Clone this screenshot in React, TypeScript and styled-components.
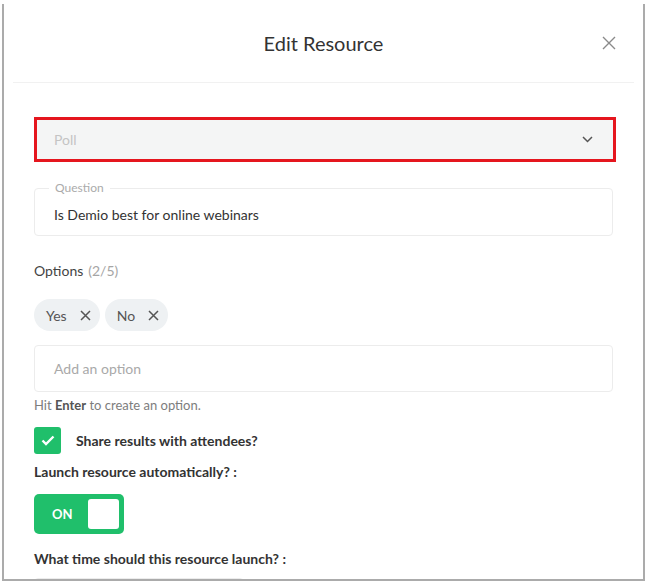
import React from "react";
import styled, { createGlobalStyle } from "styled-components";

const GlobalStyle = createGlobalStyle`
  html, body { margin: 0; padding: 0; background: #ffffff; }
  body { font-family: Lato, "Open Sans", Arial, sans-serif; color: #333; }
  * { box-sizing: border-box; }
`;

const Modal = styled.div`
  margin: 4px 0 0 2px;
  width: 643px;
  height: 577px;
  border: 2px solid #ababab;
  border-top: none;
  background: #fff;
  overflow: hidden;
`;

const Header = styled.div`
  position: relative;
  height: 79px;
  margin: 0 9px;
  border-bottom: 1px solid #f1f1f1;
  display: flex;
  align-items: center;
  justify-content: center;
`;

const Title = styled.h2`
  margin: 0;
  font-size: 20px;
  font-weight: 400;
  color: #333;
  line-height: 24px;
`;

const CloseButton = styled.button`
  position: absolute;
  right: 18px;
  top: 32px;
  width: 14px;
  height: 14px;
  padding: 0;
  border: none;
  background: transparent;
  display: flex;
  cursor: pointer;
`;

const Body = styled.div`
  padding: 34px 30px 0 30px;
  display: flex;
  flex-direction: column;
`;

const SelectBox = styled.div`
  flex-shrink: 0;
  width: calc(100% + 3px);
  height: 45px;
  border: 3px solid #e5161e;
  background: #f4f5f5;
  display: flex;
  align-items: center;
  justify-content: space-between;
  padding: 0 20px 0 17px;
  font-size: 14px;
  color: #c4c4c4;
`;

const Fieldset = styled.fieldset`
  flex-shrink: 0;
  margin: 19px 0 0 0;
  padding: 0 19px 0 19px;
  height: 55px;
  border: 1px solid #ececec;
  border-radius: 4px;
`;

const Legend = styled.legend`
  font-size: 12px;
  color: #ababab;
  padding: 0 6px;
  margin-left: -5px;
  line-height: 14px;
`;

const FieldText = styled.div`
  font-size: 14px;
  color: #333;
  line-height: 18px;
  margin-top: 11px;
`;

const SectionLabel = styled.div<{ $mt: number; $bold?: boolean }>`
  margin-top: ${(p) => p.$mt}px;
  font-size: 14px;
  line-height: 20px;
  color: ${(p) => (p.$bold ? "#333" : "#444")};
  font-weight: ${(p) => (p.$bold ? 700 : 400)};
`;

const Muted = styled.span`
  color: #a5a5a5;
  margin-left: 5px;
`;

const ChipRow = styled.div`
  margin-top: 18px;
  display: flex;
  gap: 5px;
`;

const Chip = styled.div`
  height: 32px;
  border-radius: 16px;
  background: #eef1f3;
  display: flex;
  align-items: center;
  gap: 13px;
  padding: 0 9px 0 12px;
  font-size: 14px;
  color: #555;
`;

const ChipX = styled.span`
  display: flex;
`;

const InputBox = styled.div`
  flex-shrink: 0;
  margin-top: 14px;
  height: 47px;
  border: 1px solid #ececec;
  border-radius: 4px;
  display: flex;
  align-items: center;
  padding: 0 19px;
  font-size: 14px;
  color: #a9a9a9;
`;

const Hint = styled.div`
  margin-top: 5px;
  font-size: 13px;
  line-height: 16px;
  color: #7d7d7d;
  b { color: #555; font-weight: 700; }
`;

const CheckRow = styled.label`
  margin-top: 14px;
  display: flex;
  align-items: center;
  gap: 15px;
  font-size: 14px;
  font-weight: 700;
  color: #333;
`;

const CheckBox = styled.span`
  width: 27px;
  height: 27px;
  border-radius: 3px;
  background: #20bf6b;
  display: flex;
  align-items: center;
  justify-content: center;
`;

const Toggle = styled.div`
  flex-shrink: 0;
  margin-top: 12px;
  width: 90px;
  height: 40px;
  border-radius: 5px;
  background: #20bf6b;
  display: flex;
  align-items: center;
  justify-content: space-between;
  padding: 0 5px 0 18px;
`;

const ToggleText = styled.span`
  color: #fff;
  font-weight: 700;
  font-size: 13px;
`;

const Knob = styled.span`
  width: 31px;
  height: 30px;
  border-radius: 3px;
  background: #fff;
`;

const NextInput = styled.div`
  flex-shrink: 0;
  margin-top: 9px;
  height: 40px;
  border: 1px solid #ececec;
  border-radius: 4px;
  width: 210px;
`;

export default function App() {
  return (
    <>
      <GlobalStyle />
      <Modal>
        <Header>
          <Title>Edit Resource</Title>
          <CloseButton aria-label="Close">
            <svg width="14" height="14" viewBox="0 0 14 14">
              <path d="M1 1L13 13M13 1L1 13" stroke="#8a8a8a" strokeWidth="1.4" fill="none" />
            </svg>
          </CloseButton>
        </Header>
        <Body>
          <SelectBox>
            <span>Poll</span>
            <svg width="11" height="7" viewBox="0 0 11 7">
              <path d="M1 1L5.5 5.5L10 1" stroke="#555" strokeWidth="1.5" fill="none" />
            </svg>
          </SelectBox>
          <Fieldset>
            <Legend>Question</Legend>
            <FieldText>Is Demio best for online webinars</FieldText>
          </Fieldset>
          <SectionLabel $mt={25}>
            Options<Muted>(2/5)</Muted>
          </SectionLabel>
          <ChipRow>
            {["Yes", "No"].map((o) => (
              <Chip key={o}>
                {o}
                <ChipX>
                  <svg width="11" height="11" viewBox="0 0 11 11">
                    <path d="M1 1L10 10M10 1L1 10" stroke="#555" strokeWidth="1.5" fill="none" />
                  </svg>
                </ChipX>
              </Chip>
            ))}
          </ChipRow>
          <InputBox>Add an option</InputBox>
          <Hint>
            Hit <b>Enter</b> to create an option.
          </Hint>
          <CheckRow>
            <CheckBox>
              <svg width="14" height="11" viewBox="0 0 14 11">
                <path d="M1.5 5.5L5 9L12.5 1.5" stroke="#fff" strokeWidth="2.4" fill="none" />
              </svg>
            </CheckBox>
            Share results with attendees?
          </CheckRow>
          <SectionLabel $mt={8} $bold>
            Launch resource automatically? :
          </SectionLabel>
          <Toggle>
            <ToggleText>ON</ToggleText>
            <Knob />
          </Toggle>
          <SectionLabel $mt={15} $bold>
            What time should this resource launch? :
          </SectionLabel>
          <NextInput />
        </Body>
      </Modal>
    </>
  );
}
